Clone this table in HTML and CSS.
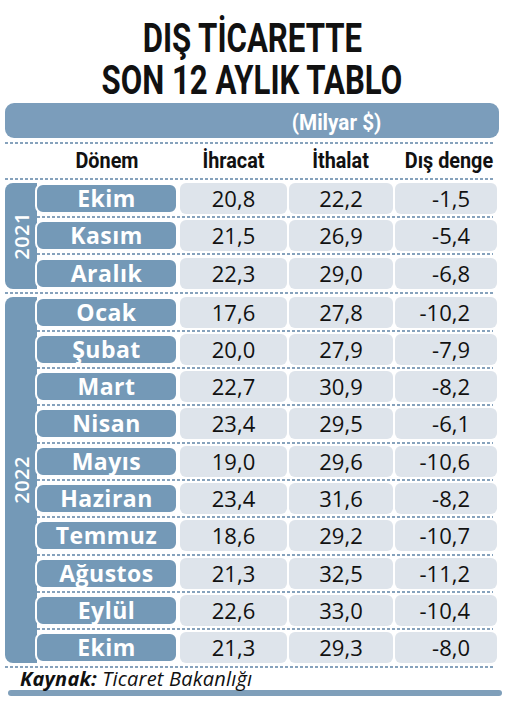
FILE: index.html
```html
<!DOCTYPE html>
<html lang="tr">
<head>
    <meta charset="UTF-8">
    <meta name="viewport" content="width=device-width, initial-scale=1.0">
    <title>Dış Ticarette Son 12 Aylık Tablo</title>
    <link rel="stylesheet" href="styles.css">
</head>
<body>
<div class="sheet">
    <h1 class="title">
        <div><span>DIŞ TİCARETTE</span></div>
        <div><span>SON 12 AYLIK TABLO</span></div>
    </h1>

    <div class="unit"><span>(Milyar $)</span></div>
    <div class="rule"></div>

    <div class="head">
        <div><span>Dönem</span></div>
        <div><span>İhracat</span></div>
        <div><span>İthalat</span></div>
        <div class="bal"><span>Dış denge</span></div>
    </div>
    <div class="rule"></div>

    <div class="group first">
        <div class="year"><span>2021</span></div>
        <div class="rows">
            <div class="row"><div class="month">Ekim</div><div class="cell">20,8</div><div class="cell">22,2</div><div class="cell bal">-1,5</div></div>
            <div class="sep"><div class="rule"></div></div>
            <div class="row"><div class="month">Kasım</div><div class="cell">21,5</div><div class="cell">26,9</div><div class="cell bal">-5,4</div></div>
            <div class="sep"><div class="rule"></div></div>
            <div class="row"><div class="month">Aralık</div><div class="cell">22,3</div><div class="cell">29,0</div><div class="cell bal">-6,8</div></div>
        </div>
    </div>

    <div class="sep wide"><div class="rule"></div></div>

    <div class="group">
        <div class="year"><span>2022</span></div>
        <div class="rows">
            <div class="row"><div class="month">Ocak</div><div class="cell">17,6</div><div class="cell">27,8</div><div class="cell bal">-10,2</div></div>
            <div class="sep"><div class="rule"></div></div>
            <div class="row"><div class="month">Şubat</div><div class="cell">20,0</div><div class="cell">27,9</div><div class="cell bal">-7,9</div></div>
            <div class="sep"><div class="rule"></div></div>
            <div class="row"><div class="month">Mart</div><div class="cell">22,7</div><div class="cell">30,9</div><div class="cell bal">-8,2</div></div>
            <div class="sep"><div class="rule"></div></div>
            <div class="row"><div class="month">Nisan</div><div class="cell">23,4</div><div class="cell">29,5</div><div class="cell bal">-6,1</div></div>
            <div class="sep"><div class="rule"></div></div>
            <div class="row"><div class="month">Mayıs</div><div class="cell">19,0</div><div class="cell">29,6</div><div class="cell bal">-10,6</div></div>
            <div class="sep"><div class="rule"></div></div>
            <div class="row"><div class="month">Haziran</div><div class="cell">23,4</div><div class="cell">31,6</div><div class="cell bal">-8,2</div></div>
            <div class="sep"><div class="rule"></div></div>
            <div class="row"><div class="month">Temmuz</div><div class="cell">18,6</div><div class="cell">29,2</div><div class="cell bal">-10,7</div></div>
            <div class="sep"><div class="rule"></div></div>
            <div class="row"><div class="month">Ağustos</div><div class="cell">21,3</div><div class="cell">32,5</div><div class="cell bal">-11,2</div></div>
            <div class="sep"><div class="rule"></div></div>
            <div class="row"><div class="month">Eylül</div><div class="cell">22,6</div><div class="cell">33,0</div><div class="cell bal">-10,4</div></div>
            <div class="sep"><div class="rule"></div></div>
            <div class="row"><div class="month">Ekim</div><div class="cell">21,3</div><div class="cell">29,3</div><div class="cell bal">-8,0</div></div>
        </div>
    </div>

    <div class="rule end"></div>
    <p class="source"><b>Kaynak:</b> Ticaret Bakanlığı</p>
    <div class="foot"></div>
</div>
</body>
</html>
```

FILE: styles.css
```css
body { margin: 0; background: #fff; color: #111; font-family: "Open Sans", "Noto Sans", sans-serif; }
.sheet { width: 494px; padding-left: 5px; }

.title { margin: 0; padding-top: 17px; font-family: Roboto, "Liberation Sans", sans-serif; font-weight: 700; font-size: 41px; line-height: 42px; text-align: center; color: #111; }
.title span { display: inline-block; transform: scaleX(0.76); }

.unit { margin-top: 2px; height: 35px; box-sizing: border-box; padding: 4px 118px 0 0; background: #7b9dbb; border-radius: 9px; text-align: right; line-height: 31px; }
.unit span { display: inline-block; font-family: Roboto, "Liberation Sans", sans-serif; font-weight: 700; font-size: 22.5px; color: #fff; transform: scaleX(0.92); transform-origin: right; }

.rule { height: 2px; margin-right: 6px; background: repeating-linear-gradient(90deg, #86a2bc 0 3px, transparent 3px 5px); }
.unit + .rule { margin-top: 4px; }

.head { display: grid; grid-template-columns: 143px 107px 104px 102px; column-gap: 2px; margin-left: 30px; height: 34px; line-height: 34px; text-align: center; white-space: nowrap; font-family: Roboto, "Liberation Sans", sans-serif; font-weight: 700; font-size: 22px; }
.head span { display: inline-block; transform: scaleX(0.9); }
.head .bal { text-align: right; padding-right: 7px; }
.head .bal span { transform-origin: right; }

.group { display: flex; margin-top: 3px; }
.year { width: 32px; flex: none; background: #7499b7; border-radius: 8px 0 0 8px; display: flex; align-items: center; justify-content: center; }
.year span { writing-mode: vertical-rl; transform: rotate(180deg); color: #fff; font-weight: 600; font-size: 20px; letter-spacing: 0.5px; }
.rows { margin-left: -2px; display: flex; flex-direction: column; }

.row { display: grid; grid-template-columns: 143px 107px 104px 102px; column-gap: 2px; height: 31px; }
.month { box-sizing: border-box; border: 2px solid #fff; border-radius: 8px; background: #7499b7; color: #fff; font-weight: 700; font-size: 23px; letter-spacing: 0.5px; line-height: 27px; text-align: center; }
.cell { background: #dee4eb; border-radius: 6px; font-size: 22px; line-height: 31px; text-align: center; }
.cell.bal { text-align: right; padding-right: 27px; }

.sep { height: 6.3px; display: flex; flex-direction: column; justify-content: center; }
.sep .rule { margin-left: 2px; margin-right: 4px; }
.sep.wide { height: 8px; }
.sep.wide .rule { margin: 0 6px 0 0; }
.sep.wide + .group { margin-top: 0; }

.rule.end { margin-top: 3px; }
.source { margin: 0; padding-left: 15px; font-style: italic; font-size: 20px; letter-spacing: 0.2px; line-height: 22px; }
.source b { font-weight: 700; }
.foot { margin: 0 -3px 0 3px; height: 6px; background: #7f9fba; border-radius: 3px; }
```
